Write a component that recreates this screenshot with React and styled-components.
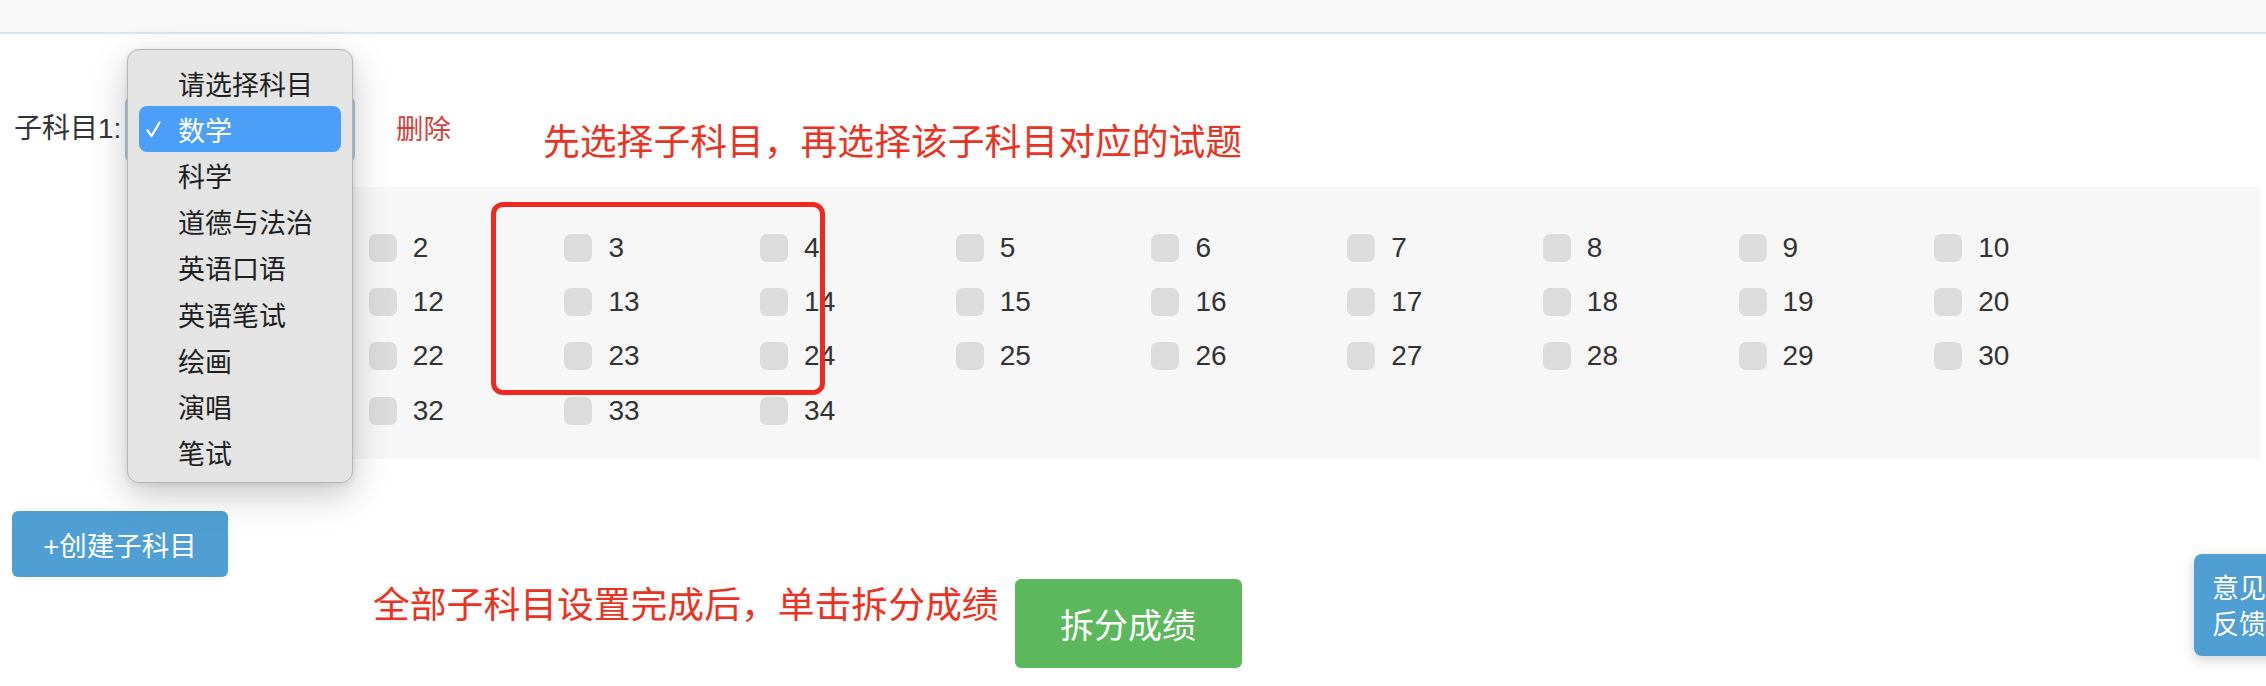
import React from 'react';
import styled, { createGlobalStyle } from 'styled-components';

const GlobalStyle = createGlobalStyle`
  html, body {
    margin: 0;
    padding: 0;
    background: #fff;
    overflow: hidden;
  }
  body {
    font-family: "Liberation Sans", "Noto Sans CJK SC", sans-serif;
    color: #333;
  }
`;

const subjects = ['请选择科目', '数学', '科学', '道德与法治', '英语口语', '英语笔试', '绘画', '演唱', '笔试'];
const questions = Array.from({ length: 34 }, (_, i) => i + 1);

const Page = styled.div`
  position: relative;
  width: 2266px;
  height: 686px;
  overflow: hidden;
`;

const TopBar = styled.div`
  height: 32px;
  background: #f8f8f8;
  border-bottom: 2px solid #d8e7f3;
`;

const Content = styled.div`
  padding: 63px 6px 0 14px;
`;

const SubjectRow = styled.div`
  display: flex;
  align-items: center;
  height: 65px;
`;

const Label = styled.label`
  width: 111px;
  margin-bottom: 7px;
  font-size: 28px;
  color: #333;
`;

const SelectBox = styled.div`
  width: 230px;
  height: 65px;
  box-sizing: border-box;
  border: 2px solid #a9cbe9;
  border-radius: 6px;
  background: #fff;
`;

const DeleteLink = styled.a`
  margin: 0 0 5px 41px;
  font-size: 27.5px;
  color: #d2433c;
  cursor: pointer;
`;

const Hint = styled.span`
  font-family: "Noto Sans CJK SC", sans-serif;
  font-size: 36.8px;
  line-height: 46px;
  color: #ea3323;
  white-space: nowrap;
  margin-left: ${p => p.$offset || 0}px;
  align-self: ${p => p.$align || 'auto'};
`;

const Panel = styled.div`
  margin: 25px 0 0 144px;
  padding: 34px 0 21px 15px;
  background: #f7f7f7;
`;

const QuestionGrid = styled.div`
  display: grid;
  grid-template-columns: repeat(10, 195.7px);
  grid-auto-rows: 54.2px;
`;

const Question = styled.label`
  display: flex;
  align-items: center;
  gap: 16px;
  font-size: 28px;
  color: #333;
  visibility: ${p => (p.$covered ? 'hidden' : 'visible')};
`;

const Checkbox = styled.span`
  width: 28px;
  height: 28px;
  border-radius: 7px;
  background: #dcdcdc;
  flex-shrink: 0;
`;

const CreateButton = styled.button`
  display: block;
  margin: 52px 0 0 -2px;
  width: 216px;
  height: 66px;
  border: none;
  border-radius: 6px;
  background: #4f9fd4;
  color: #fff;
  font-family: "Liberation Sans", "Noto Sans CJK SC", sans-serif;
  font-size: 27.5px;
  padding: 0;
`;

const BottomRow = styled.div`
  display: flex;
  align-items: flex-start;
  margin-top: 2px;
  padding-left: 359px;
`;

const SplitButton = styled.button`
  margin-left: 16px;
  width: 227px;
  height: 89px;
  border: none;
  border-radius: 6px;
  background: #5cb85c;
  color: #fff;
  font-family: "Noto Sans CJK SC", sans-serif;
  font-size: 34px;
  padding: 0;
`;

const Highlight = styled.div`
  position: absolute;
  left: 491px;
  top: 202px;
  width: 334px;
  height: 193px;
  box-sizing: border-box;
  border: 5px solid #f0291f;
  border-radius: 12px;
`;

const Menu = styled.div`
  position: absolute;
  left: 127px;
  top: 49px;
  width: 226px;
  height: 434px;
  box-sizing: border-box;
  padding: 10px 11px 8px;
  background: #e4e4e4;
  border: 1px solid #b4b4b4;
  border-radius: 12px;
  box-shadow: 0 12px 36px rgba(0, 0, 0, 0.22), 0 2px 6px rgba(0, 0, 0, 0.08);
`;

const MenuItem = styled.div`
  position: relative;
  height: 46.2px;
  display: flex;
  align-items: center;
  padding-left: 39px;
  border-radius: 8px;
  font-family: "Noto Sans CJK SC", sans-serif;
  font-size: 27px;
  color: ${p => (p.$active ? '#fff' : '#1f1f1f')};
  background: ${p => (p.$active ? '#4c9ff8' : 'transparent')};
`;

const Check = styled.svg`
  position: absolute;
  left: 7px;
  top: 15px;
`;

const Feedback = styled.div`
  position: absolute;
  left: 2194px;
  top: 554px;
  width: 100px;
  height: 102px;
  box-sizing: border-box;
  padding: 15px 0 0 18px;
  border-radius: 8px;
  background: #4f9fd4;
  color: #fff;
  font-family: "Noto Sans CJK SC", sans-serif;
  font-size: 27px;
  line-height: 36px;
  box-shadow: 0 4px 14px rgba(0, 0, 0, 0.18);
`;

export default function App() {
  return (
    <Page>
      <GlobalStyle />
      <TopBar />
      <Content>
        <SubjectRow>
          <Label>子科目1:</Label>
          <SelectBox />
          <DeleteLink>删除</DeleteLink>
          <Hint $offset={92} $align="flex-end">先选择子科目，再选择该子科目对应的试题</Hint>
        </SubjectRow>

        <Panel>
          <QuestionGrid>
            {questions.map(n => (
              // the first column sits under the open select menu
              <Question key={n} $covered={n % 10 === 1}>
                <Checkbox />
                {n}
              </Question>
            ))}
          </QuestionGrid>
        </Panel>

        <CreateButton>+创建子科目</CreateButton>

        <BottomRow>
          <Hint>全部子科目设置完成后，单击拆分成绩</Hint>
          <SplitButton>拆分成绩</SplitButton>
        </BottomRow>
      </Content>

      <Highlight />

      <Menu>
        {subjects.map(s => (
          <MenuItem key={s} $active={s === '数学'}>
            {s === '数学' && (
              <Check width="15" height="17" viewBox="0 0 15 17">
                <path d="M1.5 9.5 L5.5 15 L13.5 1.5" fill="none" stroke="#fff" strokeWidth="2.2" strokeLinecap="round" strokeLinejoin="round" />
              </Check>
            )}
            {s}
          </MenuItem>
        ))}
      </Menu>

      <Feedback>
        意见
        <br />
        反馈
      </Feedback>
    </Page>
  );
}
